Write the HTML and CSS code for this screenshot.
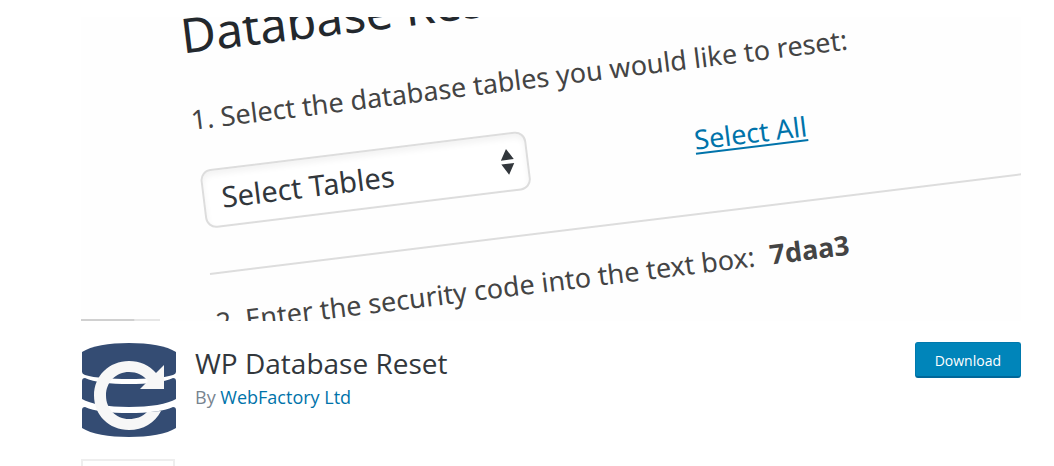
FILE: index.html
```html
<!DOCTYPE html>
<html lang="en">
<head>
    <meta charset="UTF-8">
    <meta name="viewport" content="width=device-width, initial-scale=1.0">
    <title>WP Database Reset</title>
    <link rel="stylesheet" href="styles.css">
</head>
<body>

    <!-- Banner -->
    <div class="banner">
        <div class="panel">
            <h2 class="panel-title">Database Reset</h2>
            <label class="step" for="tables">1. Select the database tables you would like to reset:</label>
            <div class="tables-row">
                <div class="select-box">
                    <select id="tables" class="tables-select">
                        <option>Select Tables</option>
                    </select>
                    <svg class="select-arrows" viewBox="0 0 14 28" aria-hidden="true">
                        <path d="M7 1l6.500 11H.5zM.5 16h13L7 27z"/>
                    </svg>
                </div>
                <a class="select-all" href="#">Select All</a>
            </div>
            <hr class="panel-rule">
            <p class="step">2. Enter the security code into the text box: <strong class="code">7daa3</strong></p>
        </div>
        <div class="banner-edge"></div>
    </div>

    <!-- Plugin header -->
    <header class="plugin-header">
        <svg class="plugin-icon" viewBox="0 0 96 96" aria-hidden="true">
            <g fill="#344c73">
                <path d="M1 10C10 4 28 1 48 1s38 3 47 9v20q0 2-3 3C82 36 66 37 48 37S14 36 4 33q-3-1-3-3z"/>
                <path d="M1 39q0-3 3-3c9 4 25 6 44 6s35-2 44-6q3 0 3 3v18c-8 5-26 8-47 8S9 62 1 57z"/>
                <path d="M1 68q0-3 3-3c9 4 25 6 44 6s35-2 44-6q3 0 3 3v18c-9 6-27 9-47 9S10 92 1 86z"/>
            </g>
            <path fill="#f7f7f7" d="M75 31l8-8v24H59l8-8C62 33 56 30 48 30c-13 0-23 10-23 23.500S35 77 48 77c7 0 13-2 18-7l14-1C74 81 62 88 48 88c-20 0-35-15-35-34.500S28 19 48 19c11 0 20 4 27 12z"/>
        </svg>
        <div class="plugin-info">
            <h1 class="plugin-title">WP Database Reset</h1>
            <span class="byline">By <a href="#">WebFactory Ltd</a></span>
        </div>
        <button class="download" type="button">Download</button>
    </header>

    <div class="notice"></div>

</body>
</html>
```
FILE: styles.css
```css
body {
    margin: 0;
    padding: 17px 33px 0 81px;
    background: #fff;
    font-family: "Open Sans", sans-serif;
}
a {
    color: #0073aa;
}

/* Banner */
.banner {
    position: relative;
    display: flow-root;
    height: 304px;
    overflow: hidden;
    background: #fefefe;
}
.panel {
    width: 900px;
    margin: -20px 0 0 95px;
    transform: rotate(-7deg);
    transform-origin: 0 0;
    color: #444;
    font-family: "Noto Sans", sans-serif;
    font-size: 27px;
}
.panel-title {
    margin: 0;
    padding: 6px 0 30px;
    color: #23282d;
    font-size: 48px;
    font-weight: 400;
    line-height: 66px;
}
.step {
    display: block;
    margin: 0;
    line-height: 44px;
}
.tables-row {
    display: flex;
    align-items: center;
    gap: 167px;
    padding: 29px 0 44px 2px;
}
.select-box {
    position: relative;
    width: 328px;
}
.tables-select {
    display: block;
    width: 100%;
    height: 59px;
    padding: 0 17px 2px;
    border: 2px solid #ddd;
    border-radius: 11px;
    appearance: none;
    background: #fff;
    box-shadow: inset 0 4px 6px rgba(0, 0, 0, 0.05);
    color: #32373c;
    font-family: inherit;
    font-size: 29px;
}
.select-arrows {
    position: absolute;
    top: 15px;
    right: 14px;
    width: 14px;
    height: 28px;
    fill: #32373c;
}
.select-all {
    line-height: 44px;
    text-underline-offset: 3px;
}
.panel-rule {
    margin: 0 0 26px;
    border: 0;
    border-top: 2px solid #ddd;
}
.code {
    margin-left: 8px;
    font-weight: 700;
}
.banner-edge {
    position: absolute;
    bottom: 0;
    left: 0;
    width: 79px;
    height: 2px;
    background: linear-gradient(to right, #d0d0d0 67%, #e6e6e6 68%);
}

/* Plugin header */
.plugin-header {
    display: flex;
    align-items: flex-start;
    padding-top: 21px;
}
.plugin-icon {
    width: 96px;
    height: 96px;
}
.plugin-info {
    flex: 1;
    padding-left: 18px;
}
.plugin-title {
    margin: 0;
    color: #32373c;
    font-size: 28px;
    font-weight: 400;
    line-height: 42px;
}
.byline {
    display: block;
    color: #78848f;
    font-size: 18px;
    line-height: 26px;
}
.byline a {
    text-decoration: none;
}
.download {
    height: 36px;
    padding: 1px 19px 0;
    border: 1px solid #0079ad;
    border-bottom: 2px solid #006799;
    border-radius: 3px;
    background: #0085ba;
    color: #fff;
    font-family: inherit;
    font-size: 14px;
    cursor: pointer;
}

/* Top of the next block */
.notice {
    width: 90px;
    height: 5px;
    margin-top: 21px;
    border: 2px solid #eee;
    border-bottom: 0;
}
```
